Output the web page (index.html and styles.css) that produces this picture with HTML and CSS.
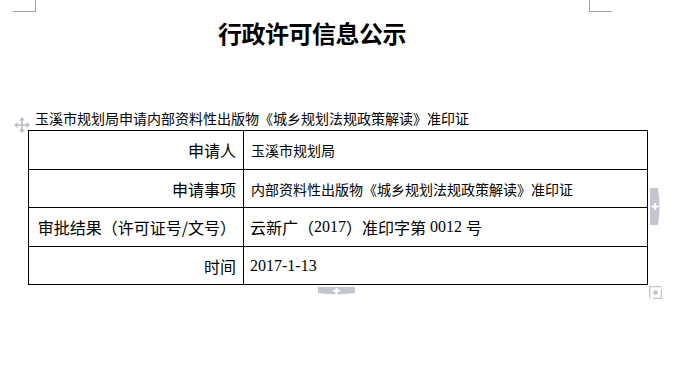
FILE: index.html
```html
<!DOCTYPE html>
<html lang="zh-CN">
<head>
<meta charset="utf-8">
<title>行政许可信息公示</title>
<link rel="stylesheet" href="styles.css">
</head>
<body>
<div class="page">
  <div class="marks">
    <span class="mark mark-l"></span>
    <span class="mark mark-r"></span>
  </div>
  <h1 class="title">行政许可信息公示</h1>
  <p class="subtitle">玉溪市规划局申请内部资料性出版物《城乡规划法规政策解读》准印证</p>
  <div class="tbl-wrap">
    <svg class="move-icon" width="16" height="16" viewBox="0 0 16 16">
      <g fill="none" stroke="#b8bcc8" stroke-width="1.6">
        <line x1="8" y1="2" x2="8" y2="14"/>
        <line x1="2" y1="8" x2="14" y2="8"/>
      </g>
      <g fill="#b8bcc8">
        <polygon points="8,0 5,3.5 11,3.5"/>
        <polygon points="8,16 5,12.5 11,12.5"/>
        <polygon points="0,8 3.5,5 3.5,11"/>
        <polygon points="16,8 12.5,5 12.5,11"/>
      </g>
    </svg>
    <div class="tbl">
      <div class="cell label r1">申请人</div>
      <div class="cell value small r1">玉溪市规划局</div>
      <div class="cell label r2">申请事项</div>
      <div class="cell value small r2">内部资料性出版物《城乡规划法规政策解读》准印证</div>
      <div class="cell label r1">审批结果（许可证号/文号）</div>
      <div class="cell value r1">云新广（<span class="num">2017</span>）准印字第<span class="num"> 0012 </span>号</div>
      <div class="cell label r2">时间</div>
      <div class="cell value r2"><span class="num">2017-1-13</span></div>
    </div>
    <svg class="side-tab" width="11" height="37" viewBox="0 0 11 37">
      <path d="M0 0 H8 Q11 18.5 8 37 H0 Z" fill="#c2c4d0"/>
      <path d="M5 15 V22 M1.5 18.5 H8.5" stroke="#fff" stroke-width="2"/>
    </svg>
    <svg class="bottom-tab" width="37" height="8" viewBox="0 0 37 8">
      <path d="M0 0 H37 V6 Q18.5 8.5 0 6 Z" fill="#c2c4d0"/>
      <path d="M18.5 1 V7 M15 3.8 H22" stroke="#fff" stroke-width="2"/>
    </svg>
    <svg class="resize" width="13" height="13" viewBox="0 0 13 13">
      <path d="M0.5 12.5 V0.5 H12.5" fill="none" stroke="#c2c4d0" stroke-width="1.5"/>
      <path d="M12.5 4 V12.5 H4" fill="none" stroke="#c2c4d0" stroke-width="1.5"/>
      <rect x="4.5" y="4.5" width="4" height="4" fill="#c2c4d0"/>
    </svg>
  </div>
</div>
</body>
</html>
```

FILE: styles.css
```css
html, body {
  margin: 0;
  padding: 0;
  background: #ffffff;
}
body {
  font-family: "Noto Sans CJK SC", "DejaVu Sans", sans-serif;
  color: #000;
}
.page {
  width: 685px;
  height: 370px;
}
.marks {
  display: flex;
  height: 12px;
}
.mark {
  display: block;
  width: 22px;
  height: 11px;
  border-bottom: 1px solid #a4a4a4;
}
.mark-l {
  margin-left: 13px;
  border-right: 1px solid #a4a4a4;
}
.mark-r {
  margin-left: 553px;
  border-left: 1px solid #a4a4a4;
}
.title {
  margin: 9px 0 0 35px;
  width: 554px;
  text-align: center;
  font-size: 24px;
  line-height: 24px;
  font-weight: bold;
  letter-spacing: -0.5px;
}
.subtitle {
  margin: 66px 0 0 35px;
  font-size: 14px;
  line-height: 14px;
  white-space: nowrap;
}
.tbl-wrap {
  position: relative;
  margin: 5px 0 0 28px;
  width: 620px;
}
.tbl {
  display: grid;
  grid-template-columns: 215px 404px;
  border-left: 1px solid #000;
  border-top: 1px solid #000;
  font-size: 16px;
}
.cell {
  display: flex;
  align-items: center;
  box-sizing: border-box;
  border-right: 1px solid #000;
  border-bottom: 1px solid #000;
  white-space: pre;
  line-height: 16px;
}
.r1 { height: 39px; }
.r2 { height: 38px; }
.label {
  justify-content: flex-end;
  padding-right: 7px;
}
.value {
  padding-left: 6px;
}
.value.small {
  font-size: 14px;
  padding-left: 7px;
}
.num {
  font-family: "Liberation Serif", serif;
}
.move-icon {
  position: absolute;
  left: -14px;
  top: -13px;
}
.side-tab {
  position: absolute;
  left: 622px;
  top: 58px;
}
.bottom-tab {
  position: absolute;
  left: 290px;
  top: 157px;
}
.resize {
  position: absolute;
  left: 621px;
  top: 156px;
}
```
